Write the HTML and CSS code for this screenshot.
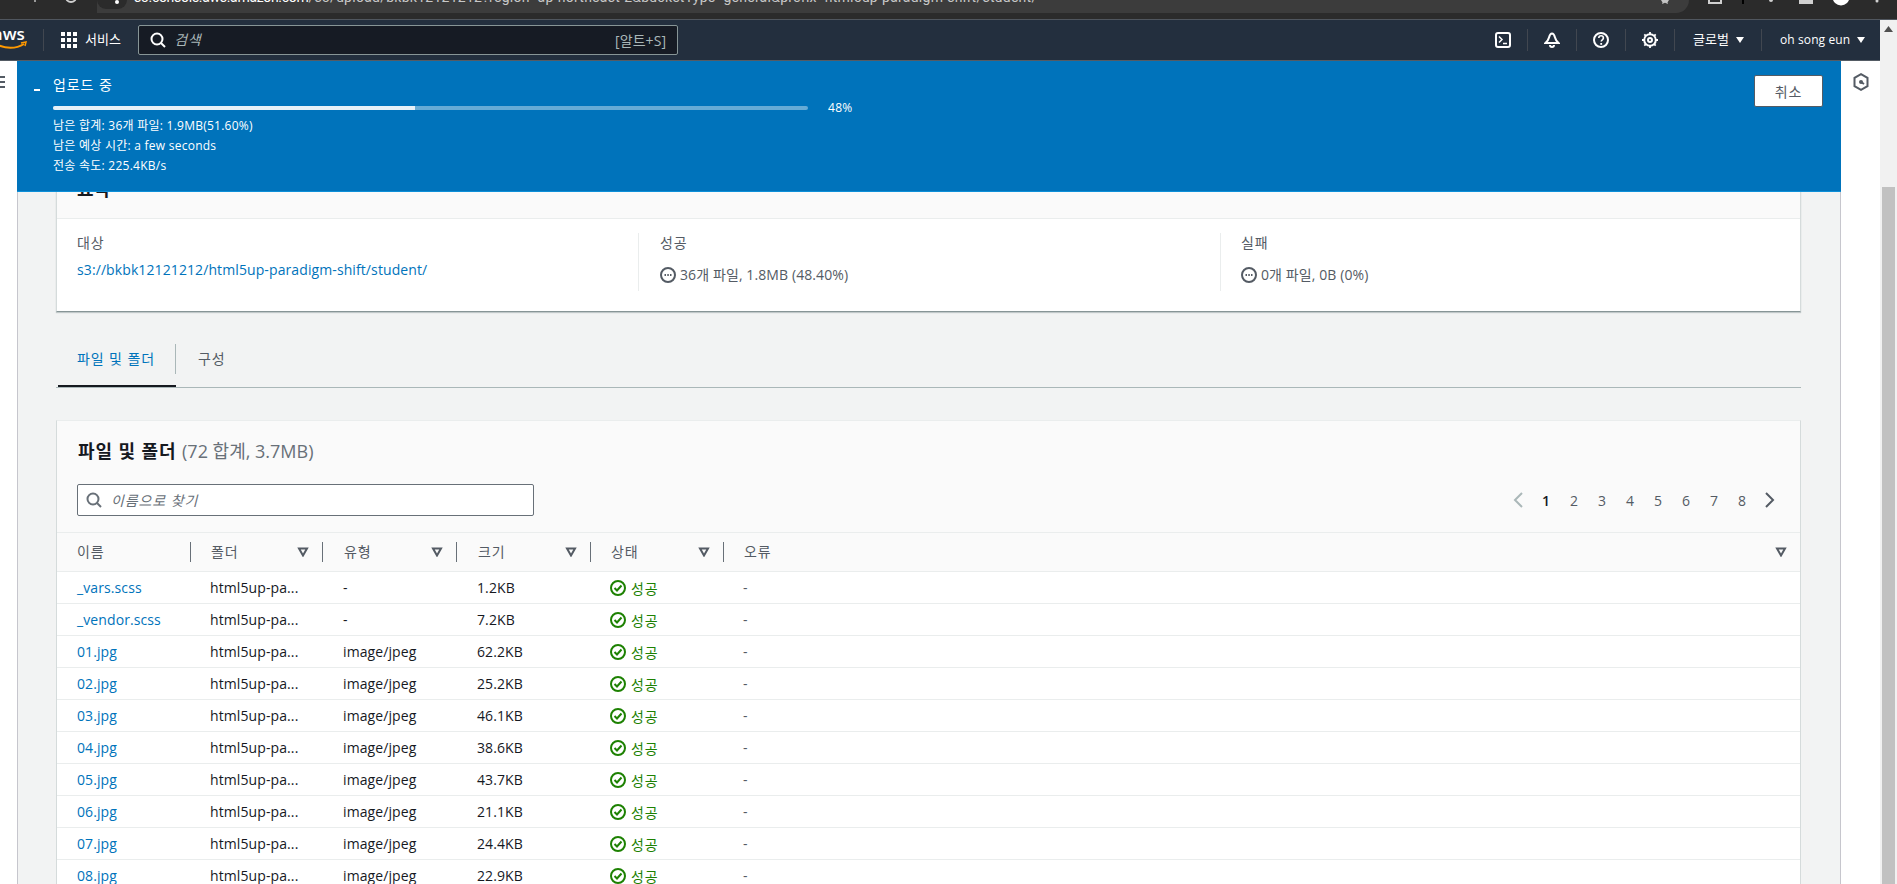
FILE: index.html
```html
<!DOCTYPE html>
<html lang="ko">
<head>
<meta charset="utf-8">
<title>S3 업로드</title>
<link rel="stylesheet" href="styles.css">
</head>
<body>
<header class="browser">
  <svg class="browser-left" width="97" height="19" viewBox="0 0 97 19"><circle cx="71" cy="-3" r="5" fill="none" stroke="#d0d0d0" stroke-width="2"/><rect x="34" y="0" width="2" height="2" fill="#9a9a9a"/></svg>
  <div class="address">
    <span class="site-pill"><i class="site-dot"></i></span>
    <span class="url"><b>s3.console.aws.amazon.com</b>/s3/upload/bkbk12121212?region=ap-northeast-2&amp;bucketType=general&amp;prefix=html5up-paradigm-shift/student/</span>
    <svg class="star" width="14" height="4" viewBox="0 0 14 4"><path d="M3 0h8L9.500 2.500 10 4 7 2.800 4 4l.500-1.500z" fill="#c4c4c4"/></svg>
  </div>
  <svg class="browser-right" width="208" height="19" viewBox="0 0 208 19"><path d="M20 0v3h12V0" fill="none" stroke="#d0d0d0" stroke-width="2"/><rect x="53" y="0" width="2" height="4" fill="#000"/><circle cx="82" cy="0" r="2" fill="#d0d0d0"/><path d="M111 0v3h12V0" fill="#d0d0d0" stroke="#d0d0d0" stroke-width="2"/><circle cx="152" cy="-3" r="8.500" fill="#fff"/><circle cx="188" cy="1" r="1.500" fill="#d0d0d0"/></svg>
</header>
<div class="window">
  <div class="app">
    <nav class="nav">
      <svg class="aws" width="43" height="40" viewBox="0 0 43 40"><text x="25" y="20" text-anchor="end" class="aws-text">aws</text><path d="M-4 24c9 5 20 5 28 0" fill="none" stroke="#f90" stroke-width="2"/><path d="M21 23l5-1-1 4" fill="none" stroke="#f90" stroke-width="1.500"/></svg>
      <span class="nav-sep"></span>
      <svg class="grid-icon" width="16" height="16" viewBox="0 0 16 16" fill="#fff"><rect width="4" height="4"/><rect x="6" width="4" height="4"/><rect x="12" width="4" height="4"/><rect y="6" width="4" height="4"/><rect x="6" y="6" width="4" height="4"/><rect x="12" y="6" width="4" height="4"/><rect y="12" width="4" height="4"/><rect x="6" y="12" width="4" height="4"/><rect x="12" y="12" width="4" height="4"/></svg>
      <span class="nav-text services">서비스</span>
      <div class="global-search">
        <svg width="16" height="16" viewBox="0 0 16 16" fill="none" stroke="#fff" stroke-width="2"><circle cx="7" cy="7" r="5.500"/><path d="M11 11l4 4"/></svg>
        <span class="global-placeholder">검색</span>
        <span class="shortcut">[알트+S]</span>
      </div>
      <div class="nav-right">
        <span class="nav-icon first"><svg width="16" height="16" viewBox="0 0 16 16" fill="none" stroke="#fff" stroke-width="2"><rect x="1" y="1" width="14" height="14" rx="2"/><path d="M4 4.500L7 7.500 4 10.500M8 11.500h4" stroke-width="1.500"/></svg></span>
        <span class="nav-icon"><svg width="16" height="16" viewBox="0 0 16 16" fill="none" stroke="#fff" stroke-width="2"><path d="M8 1.500C6 1.500 5.500 3.500 5 5.500 4.500 8 3 9.500 1.500 11h13C13 9.500 11.500 8 11 5.500 10.500 3.500 10 1.500 8 1.500z"/><path d="M6 13a2 2 0 0 0 4 0"/></svg></span>
        <span class="nav-icon"><svg width="16" height="16" viewBox="0 0 16 16" fill="none" stroke="#fff" stroke-width="2"><circle cx="8" cy="8" r="7"/><path d="M5.800 6c0-3 4.600-3 4.600 0 0 1.800-2.200 1.800-2.200 3.500" stroke-width="1.600"/><rect x="7.300" y="11" width="1.800" height="1.800" fill="#fff" stroke="none"/></svg></span>
        <span class="nav-icon"><svg width="16" height="16" viewBox="0 0 16 16" fill="none" stroke="#fff" stroke-width="2"><circle cx="8" cy="8" r="5.800"/><circle cx="8" cy="8" r="2"/><path d="M8 0v2.500M8 13.500V16M0 8h2.500M13.500 8H16M2.300 2.300l1.800 1.800M11.900 11.900l1.800 1.800M13.700 2.300l-1.800 1.800M4.100 11.900l-1.800 1.800" stroke-width="1.800"/></svg></span>
        <span class="nav-menu region"><span class="nav-text">글로벌</span><i class="caret"></i></span>
        <span class="nav-menu user"><span class="nav-text user-name">oh song eun</span><i class="caret"></i></span>
      </div>
    </nav>
    <div class="workspace">
      <aside class="rail-left">
        <svg class="hamburger" width="5" height="12" viewBox="0 0 5 12" fill="#545b64"><rect width="5" height="2"/><rect y="5" width="5" height="2"/><rect y="10" width="5" height="2"/></svg>
      </aside>
      <main class="main">
        <section class="card summary">
          <div class="summary-head"><h2>요약</h2></div>
          <div class="summary-body">
            <div class="summary-col">
              <div class="label ko">대상</div>
              <a class="link dest">s3://bkbk12121212/html5up-paradigm-shift/student/</a>
            </div>
            <div class="summary-col ruled">
              <div class="label ko">성공</div>
              <div class="progress-value"><svg width="16" height="16" viewBox="0 0 16 16" fill="none" stroke="#545b64" stroke-width="2"><circle cx="8" cy="8" r="7"/><path d="M4.500 8h1.500M7.300 8h1.500M10 8h1.500"/></svg><span>36개 파일, 1.8MB (48.40%)</span></div>
            </div>
            <div class="summary-col ruled">
              <div class="label ko">실패</div>
              <div class="progress-value"><svg width="16" height="16" viewBox="0 0 16 16" fill="none" stroke="#545b64" stroke-width="2"><circle cx="8" cy="8" r="7"/><path d="M4.500 8h1.500M7.300 8h1.500M10 8h1.500"/></svg><span>0개 파일, 0B (0%)</span></div>
            </div>
          </div>
        </section>

        <div class="tabs">
          <div class="tab active"><span class="tab-label ko">파일 및 폴더</span></div>
          <div class="tab"><span class="tab-label plain ko">구성</span></div>
        </div>

        <section class="card files">
          <div class="files-head">
            <h2 class="files-title">파일 및 폴더 <span class="count">(72 합계, 3.7MB)</span></h2>
            <div class="files-tools">
              <div class="find">
                <svg width="16" height="16" viewBox="0 0 16 16" fill="none" stroke="#687078" stroke-width="2"><circle cx="7" cy="7" r="5.500"/><path d="M11 11l4 4"/></svg>
                <span class="find-placeholder">이름으로 찾기</span>
              </div>
              <div class="pager">
                <svg class="chev" width="12" height="16" viewBox="0 0 12 16" fill="none" stroke="#aab7b8" stroke-width="2"><path d="M10 1L3 8l7 7"/></svg>
                <span class="page current">1</span><span class="page">2</span><span class="page">3</span><span class="page">4</span><span class="page">5</span><span class="page">6</span><span class="page">7</span><span class="page">8</span>
                <svg class="chev next" width="12" height="16" viewBox="0 0 12 16" fill="none" stroke="#545b64" stroke-width="2"><path d="M2 1l7 7-7 7"/></svg>
              </div>
            </div>
          </div>
          <div class="thead">
            <div class="th ko">이름</div>
            <div class="th ruled ko">폴더<svg class="filter" width="12" height="10" viewBox="0 0 12 10"><path d="M2 1.500h8L6 8.500z"/></svg></div>
            <div class="th ruled ko">유형<svg class="filter" width="12" height="10" viewBox="0 0 12 10"><path d="M2 1.500h8L6 8.500z"/></svg></div>
            <div class="th ruled ko">크기<svg class="filter" width="12" height="10" viewBox="0 0 12 10"><path d="M2 1.500h8L6 8.500z"/></svg></div>
            <div class="th ruled ko">상태<svg class="filter" width="12" height="10" viewBox="0 0 12 10"><path d="M2 1.500h8L6 8.500z"/></svg></div>
            <div class="th ruled ko">오류<svg class="filter" width="12" height="10" viewBox="0 0 12 10"><path d="M2 1.500h8L6 8.500z"/></svg></div>
          </div>
          <div class="row"><a class="link">_vars.scss</a><span>html5up-pa...</span><span>-</span><span>1.2KB</span><span class="ok"><svg width="16" height="16" viewBox="0 0 16 16" fill="none" stroke="#1d8102" stroke-width="2"><circle cx="8" cy="8" r="7"/><path d="M4.500 8l2.500 2.500 4.500-5"/></svg><span class="ko">성공</span></span><span class="dash">-</span></div>
          <div class="row"><a class="link">_vendor.scss</a><span>html5up-pa...</span><span>-</span><span>7.2KB</span><span class="ok"><svg width="16" height="16" viewBox="0 0 16 16" fill="none" stroke="#1d8102" stroke-width="2"><circle cx="8" cy="8" r="7"/><path d="M4.500 8l2.500 2.500 4.500-5"/></svg><span class="ko">성공</span></span><span class="dash">-</span></div>
          <div class="row"><a class="link">01.jpg</a><span>html5up-pa...</span><span>image/jpeg</span><span>62.2KB</span><span class="ok"><svg width="16" height="16" viewBox="0 0 16 16" fill="none" stroke="#1d8102" stroke-width="2"><circle cx="8" cy="8" r="7"/><path d="M4.500 8l2.500 2.500 4.500-5"/></svg><span class="ko">성공</span></span><span class="dash">-</span></div>
          <div class="row"><a class="link">02.jpg</a><span>html5up-pa...</span><span>image/jpeg</span><span>25.2KB</span><span class="ok"><svg width="16" height="16" viewBox="0 0 16 16" fill="none" stroke="#1d8102" stroke-width="2"><circle cx="8" cy="8" r="7"/><path d="M4.500 8l2.500 2.500 4.500-5"/></svg><span class="ko">성공</span></span><span class="dash">-</span></div>
          <div class="row"><a class="link">03.jpg</a><span>html5up-pa...</span><span>image/jpeg</span><span>46.1KB</span><span class="ok"><svg width="16" height="16" viewBox="0 0 16 16" fill="none" stroke="#1d8102" stroke-width="2"><circle cx="8" cy="8" r="7"/><path d="M4.500 8l2.500 2.500 4.500-5"/></svg><span class="ko">성공</span></span><span class="dash">-</span></div>
          <div class="row"><a class="link">04.jpg</a><span>html5up-pa...</span><span>image/jpeg</span><span>38.6KB</span><span class="ok"><svg width="16" height="16" viewBox="0 0 16 16" fill="none" stroke="#1d8102" stroke-width="2"><circle cx="8" cy="8" r="7"/><path d="M4.500 8l2.500 2.500 4.500-5"/></svg><span class="ko">성공</span></span><span class="dash">-</span></div>
          <div class="row"><a class="link">05.jpg</a><span>html5up-pa...</span><span>image/jpeg</span><span>43.7KB</span><span class="ok"><svg width="16" height="16" viewBox="0 0 16 16" fill="none" stroke="#1d8102" stroke-width="2"><circle cx="8" cy="8" r="7"/><path d="M4.500 8l2.500 2.500 4.500-5"/></svg><span class="ko">성공</span></span><span class="dash">-</span></div>
          <div class="row"><a class="link">06.jpg</a><span>html5up-pa...</span><span>image/jpeg</span><span>21.1KB</span><span class="ok"><svg width="16" height="16" viewBox="0 0 16 16" fill="none" stroke="#1d8102" stroke-width="2"><circle cx="8" cy="8" r="7"/><path d="M4.500 8l2.500 2.500 4.500-5"/></svg><span class="ko">성공</span></span><span class="dash">-</span></div>
          <div class="row"><a class="link">07.jpg</a><span>html5up-pa...</span><span>image/jpeg</span><span>24.4KB</span><span class="ok"><svg width="16" height="16" viewBox="0 0 16 16" fill="none" stroke="#1d8102" stroke-width="2"><circle cx="8" cy="8" r="7"/><path d="M4.500 8l2.500 2.500 4.500-5"/></svg><span class="ko">성공</span></span><span class="dash">-</span></div>
          <div class="row"><a class="link">08.jpg</a><span>html5up-pa...</span><span>image/jpeg</span><span>22.9KB</span><span class="ok"><svg width="16" height="16" viewBox="0 0 16 16" fill="none" stroke="#1d8102" stroke-width="2"><circle cx="8" cy="8" r="7"/><path d="M4.500 8l2.500 2.500 4.500-5"/></svg><span class="ko">성공</span></span><span class="dash">-</span></div>
        </section>
      </main>
      <aside class="rail-right">
        <svg width="16" height="18" viewBox="0 0 16 18" fill="none" stroke="#545b64" stroke-width="2"><path d="M8 1.200l6.500 3.700v8.200L8 16.800l-6.500-3.700V4.900z"/><circle cx="8" cy="9" r="2" fill="#545b64" stroke="none"/><path d="M8 9l3 2"/></svg>
      </aside>
      <div class="banner">
        <div class="banner-main">
          <span class="banner-toggle"></span>
          <div class="banner-text">
            <div class="banner-title ko">업로드 중</div>
            <div class="bar-row">
              <div class="bar"><div class="bar-fill"></div></div>
              <span class="bar-pct">48%</span>
            </div>
            <div class="banner-line">남은 합계: 36개 파일: 1.9MB(51.60%)</div>
            <div class="banner-line">남은 예상 시간: a few seconds</div>
            <div class="banner-line">전송 속도: 225.4KB/s</div>
          </div>
        </div>
        <button class="cancel ko">취소</button>
      </div>
    </div>
  </div>
  <div class="scrollbar">
    <svg class="scroll-up" width="9" height="6" viewBox="0 0 9 6"><path d="M4.500 0L9 6H0z" fill="#505050"/></svg>
    <div class="scroll-thumb"></div>
  </div>
</div>
</body>
</html>
```
FILE: styles.css
```css
* { box-sizing: border-box; }
html, body { margin: 0; height: 884px; overflow: hidden; }
body {
  width: 1897px;
  font-family: "Open Sans", "Noto Sans CJK KR", sans-serif;
  font-size: 14px;
  letter-spacing: 0.1px;
  color: #16191f;
  background: #fff;
}
h2 { margin: 0; font-size: 18px; font-weight: 700; }
.ko { letter-spacing: 0.9px; }

/* browser strip */
.browser { height: 20px; display: flex; background: #2b2b2b; border-bottom: 1px solid #50565e; overflow: hidden; }
.browser-left { flex: none; }
.address { flex: none; width: 1592px; height: 13px; background: #3c3c3c; border-radius: 0 0 13px 0; display: flex; position: relative; overflow: hidden; }
.site-pill { flex: none; width: 30px; height: 9px; background: #2b2b2b; border-radius: 0 0 14px 14px; display: flex; justify-content: center; }
.site-dot { width: 4px; height: 4px; margin-left: 10px; background: #fff; border-radius: 50%; }
.url { margin: -12px 0 0 7px; font-family: Roboto, sans-serif; font-size: 14px; line-height: 18px; letter-spacing: 0.26px; white-space: nowrap; color: #c7c7c7; }
.url b { font-weight: 400; letter-spacing: -0.3px; color: #fff; }
.star { position: absolute; right: 17px; top: 0; }
.browser-right { flex: none; }

/* window */
.window { display: flex; height: 864px; }
.app { flex: none; width: 1880px; display: flex; flex-direction: column; }
.scrollbar { flex: none; width: 17px; background: #f1f1f1; display: flex; flex-direction: column; align-items: center; padding-top: 6px; }
.scroll-up { flex: none; }
.scroll-thumb { width: 13px; height: 697px; margin-top: 155px; background: #c1c1c1; }

/* top nav */
.nav { flex: none; height: 41px; background: #232f3e; border-bottom: 1px solid #545b64; display: flex; align-items: center; color: #fff; }
.aws { flex: none; }
.aws-text { font-family: "Open Sans", sans-serif; font-size: 17px; font-weight: 600; fill: #fff; }
.nav-sep { flex: none; width: 1px; height: 22px; background: #414750; }
.grid-icon { flex: none; margin-left: 17px; }
.nav-text { font-size: 13px; line-height: 18px; white-space: nowrap; margin-top: -2px; }
.user-name { font-size: 12px; margin-top: 0; }
.services { margin-left: 8px; }
.global-search { flex: none; width: 540px; height: 30px; margin-left: 17px; background: #161b24; border: 1px solid #879596; border-radius: 2px; display: flex; align-items: center; padding: 0 11px 0 11px; }
.global-placeholder { margin: -2px 0 0 8px; font-style: italic; color: #aab7b8; letter-spacing: 0.6px; }
.shortcut { margin: -1px 0 0 auto; font-size: 14px; color: #aab7b8; }
.nav-right { margin-left: auto; display: flex; align-items: center; height: 100%; }
.nav-icon { display: flex; align-items: center; height: 22px; padding: 0 16px; border-right: 1px solid #414750; }
.nav-icon.first { padding-left: 0; }
.nav-menu { display: flex; align-items: center; height: 22px; padding-left: 18px; }
.region { width: 87px; border-right: 1px solid #414750; }
.user { width: 118px; }
.caret { margin-left: 7px; width: 0; height: 0; border-left: 4px solid transparent; border-right: 4px solid transparent; border-top: 6px solid #fff; }

/* workspace */
.workspace { flex: 1; display: flex; position: relative; min-height: 0; }
.rail-left { flex: none; width: 18px; background: #fff; border-right: 1px solid #c6c6cd; }
.hamburger { display: block; margin-top: 15px; }
.rail-right { flex: none; width: 39px; background: #fff; display: flex; justify-content: center; padding-top: 12px; }
.main { flex: none; width: 1823px; background: #f2f3f3; border-right: 1px solid #c6c6cd; padding: 100px 39px 0 38px; overflow: hidden; }

/* banner */
.banner { position: absolute; left: 17px; top: 0; width: 1824px; height: 131px; background: #0073bb; border-bottom: 1px solid #0d8fd8; color: #fff; display: flex; justify-content: space-between; padding: 14px 18px 0 0; }
.banner-main { display: flex; }
.banner-toggle { width: 6px; height: 2px; margin: 14px 13px 0 17px; background: #fff; }
.banner-title { font-size: 14px; line-height: 20px; }
.bar-row { display: flex; align-items: center; margin-top: 6px; height: 14px; }
.bar { width: 755px; height: 4px; background: #66abd6; border-radius: 2px; overflow: hidden; }
.bar-fill { width: 48%; height: 100%; background: #e6f1f8; }
.bar-pct { margin-left: 20px; font-size: 12px; line-height: 14px; letter-spacing: 0.3px; }
.banner-line { font-size: 12px; line-height: 20px; letter-spacing: 0.25px; }
.bar-row + .banner-line { margin-top: 1px; }
.cancel { width: 69px; height: 32px; background: #fff; border: 1px solid #545b64; border-radius: 2px; font: inherit; font-size: 14px; color: #545b64; padding: 0; }

/* cards */
.card { background: #fff; border: 1px solid #d5dbdb; }
.summary { border-top: 0; border-bottom: 1px solid #879596; box-shadow: 0 1px 1px rgba(0,28,36,.2); }
.summary-head { height: 58px; background: #fafafa; border-bottom: 1px solid #eaeded; padding: 17px 20px 0; line-height: 22px; }
.summary-body { display: grid; grid-template-columns: 581px 582px 1fr; padding: 14px 0 20px; height: 92px; }
.summary-col { padding-left: 20px; }
.summary-col.ruled { padding-left: 21px; }
.summary-col.ruled + .summary-col.ruled { padding-left: 20px; }
.summary-col.ruled { border-left: 1px solid #eaeded; }
.label { line-height: 20px; color: #545b64; }
.link { color: #0073bb; white-space: nowrap; }
.dest { display: block; margin-top: 7px; line-height: 20px; }
.progress-value { margin-top: 12px; display: flex; align-items: center; gap: 4px; color: #545b64; line-height: 20px; }

/* tabs */
.tabs { display: flex; height: 44px; margin: 32px 0 0 0; padding-left: 2px; border-bottom: 1px solid #aab7b8; }
.tab { height: 43px; border-bottom: 2px solid transparent; }
.tab.active { border-bottom-color: #16191f; }
.tab-label { display: block; height: 30px; line-height: 30px; padding: 0 20px 0 19px; color: #0073bb; border-right: 1px solid #aab7b8; }
.tab-label.plain { padding-left: 22px; color: #545b64; border-right: 0; }

/* files card */
.files { margin-top: 32px; border-top: 1px solid #eaeded; border-bottom: 0; }
.files-head { background: #fafafa; padding: 18px 20px 16px; }
.files-title { padding-left: 1px; line-height: 24px; letter-spacing: 0.9px; }
.count { font-weight: 400; color: #687078; letter-spacing: 0; }
.files-tools { margin-top: 21px; display: flex; justify-content: space-between; align-items: center; }
.find { width: 457px; height: 32px; background: #fff; border: 1px solid #687078; border-radius: 2px; display: flex; align-items: center; padding-left: 8px; }
.find-placeholder { margin-left: 9px; font-style: italic; color: #687078; letter-spacing: 0.9px; }
.pager { display: flex; align-items: center; padding-right: 4px; }
.chev { flex: none; }
.chev.next { margin-left: 8px; }
.page { width: 28px; text-align: center; color: #545b64; }
.pager .page:first-of-type { margin-left: 8px; }
.page.current { color: #16191f; font-weight: 600; }
.thead, .row { display: grid; grid-template-columns: 133px 132px 134px 134px 133px 1fr; }
.thead { height: 40px; background: #fafafa; border-top: 1px solid #eaeded; border-bottom: 1px solid #eaeded; align-items: center; }
.th { height: 20px; line-height: 20px; padding: 0 13px 0 20px; color: #545b64; display: flex; align-items: center; justify-content: space-between; }
.th:nth-child(3), .th:nth-child(4) { padding-left: 21px; }
.th.ruled { border-left: 1px solid #687078; }
.filter { flex: none; fill: none; stroke: #545b64; stroke-width: 2; }
.row { height: 32px; align-items: center; border-bottom: 1px solid #eaeded; }
.row > * { padding-left: 20px; white-space: nowrap; }
.row > :nth-child(3), .row > :nth-child(4) { padding-left: 21px; }
.ok { display: flex; align-items: center; gap: 5px; color: #1d8102; }
.ok svg { flex: none; }
.dash { color: #545b64; }
```
